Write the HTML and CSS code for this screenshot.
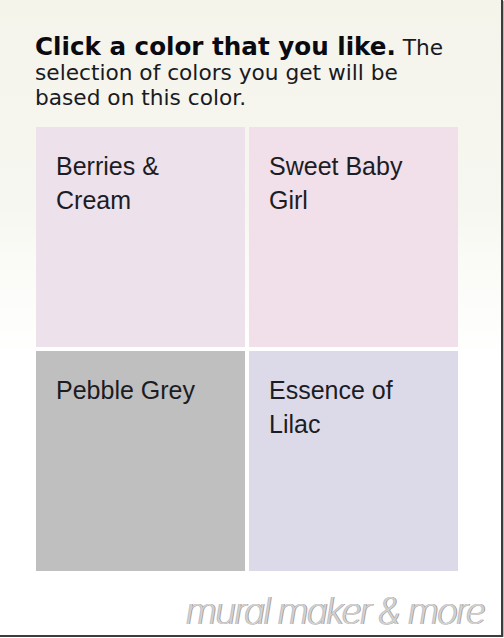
FILE: index.html
```html
<!DOCTYPE html>
<html>
<head>
<meta charset="utf-8">
<link rel="stylesheet" href="styles.css">
</head>
<body>
<div class="frame">
  <p class="intro"><b class="lead">Click a color that you like.</b> The selection of colors you get will be based on this color.</p>
  <div class="swatches">
    <div class="swatch berries">Berries &amp; Cream</div>
    <div class="swatch baby">Sweet Baby Girl</div>
    <div class="swatch pebble">Pebble Grey</div>
    <div class="swatch lilac">Essence of Lilac</div>
  </div>
  <div class="mark">mural maker &amp; more</div>
</div>
</body>
</html>
```
FILE: styles.css
```css
html, body {
  margin: 0;
  padding: 0;
  background: #ffffff;
}
.frame {
  box-sizing: border-box;
  width: 503px;
  height: 637px;
  border-right: 2px solid #3c3c3c;
  border-bottom: 2px solid #3c3c3c;
  box-shadow: 1px 1px 0 #b8b8b8;
  background: linear-gradient(to bottom, #f4f4eb 0px, #f7f7f1 200px, #ffffff 360px, #ffffff 100%);
  padding: 34px 0 0 35px;
  display: flex;
  flex-direction: column;
}
.intro {
  margin: 0;
  width: 422px;
  font-family: "DejaVu Sans", Verdana, sans-serif;
  font-size: 21.7px;
  line-height: 25px;
  color: #1a1a22;
}
.lead {
  font-weight: bold;
  font-size: 24.6px;
  color: #0a0a10;
}
.swatches {
  margin-top: 17px;
  margin-left: 1px;
  display: grid;
  grid-template-columns: 209px 209px;
  grid-auto-rows: 220px;
  gap: 4px;
}
.swatch {
  box-sizing: border-box;
  padding: 22px 24px 0 20px;
  font-family: "Liberation Sans", Arial, sans-serif;
  font-size: 25px;
  line-height: 34px;
  color: #1c1c24;
}
.berries { background: #ede1eb; }
.baby { background: #f1dfe9; }
.pebble { background: #bfbfbf; }
.lilac { background: #dcdae9; }
.mark {
  margin-top: 18px;
  padding-right: 17px;
  text-align: right;
  font-family: Inter, "DejaVu Sans", sans-serif;
  font-weight: 200;
  font-style: italic;
  font-size: 36px;
  line-height: 44px;
  letter-spacing: -2px;
  color: #d6d2ce;
  text-shadow: 1px 0 0 #a6a09c, -1px 0 0 #b8c2d0;
}
```
